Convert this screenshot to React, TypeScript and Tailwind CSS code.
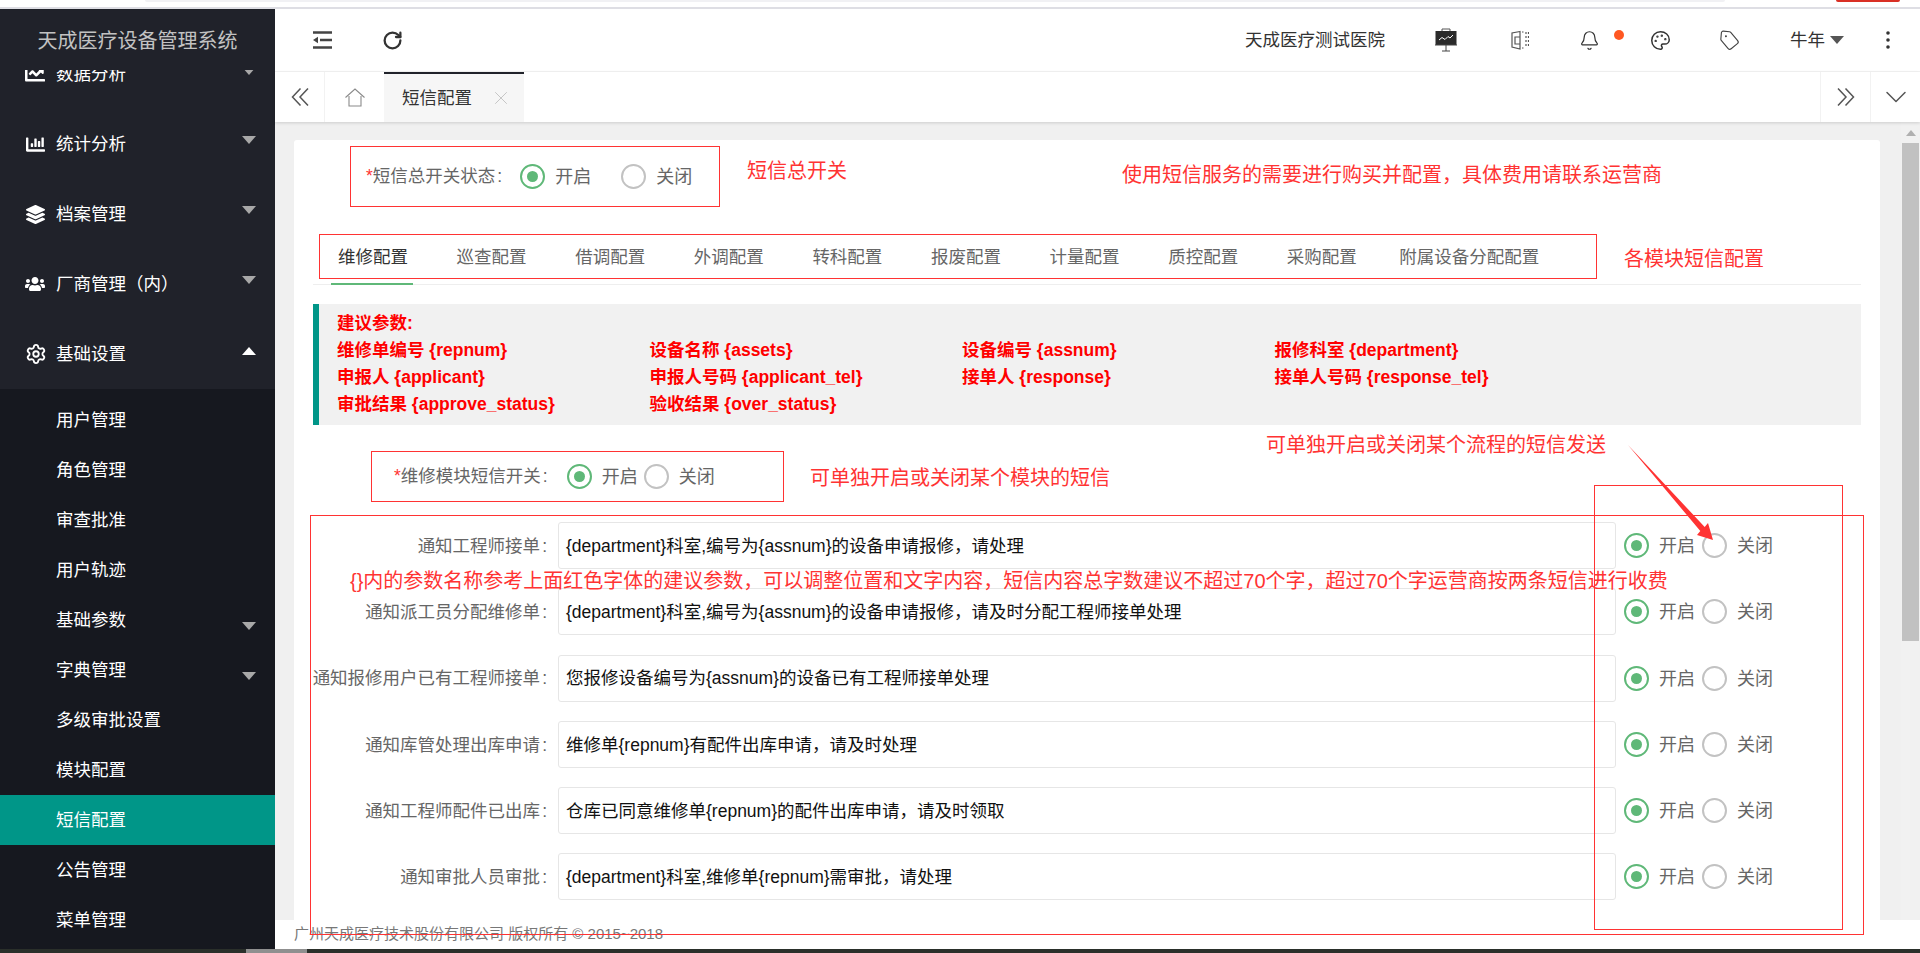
import { FaChartBar, FaChartLine, FaLayerGroup, FaUsers } from 'react-icons/fa'
import { Bell, ChevronDown, Palette, RotateCw, Settings, Tag, X } from 'lucide-react'

const FONT = 'font-["Liberation_Sans","Noto_Sans_CJK_SC",sans-serif]'

const topMenu = [
  { name: '统计分析', icon: <FaChartBar size={19} /> },
  { name: '档案管理', icon: <FaLayerGroup size={19} /> },
  { name: '厂商管理（内）', icon: <FaUsers size={20} /> },
]

const subMenu = [
  { name: '用户管理' },
  { name: '角色管理' },
  { name: '审查批准' },
  { name: '用户轨迹' },
  { name: '基础参数', arrow: true },
  { name: '字典管理', arrow: true },
  { name: '多级审批设置' },
  { name: '模块配置' },
  { name: '短信配置', active: true },
  { name: '公告管理' },
  { name: '菜单管理' },
]

const tabs = ['维修配置', '巡查配置', '借调配置', '外调配置', '转科配置', '报废配置', '计量配置', '质控配置', '采购配置', '附属设备分配配置']

const params = [
  ['维修单编号 {repnum}', '设备名称 {assets}', '设备编号 {assnum}', '报修科室 {department}'],
  ['申报人 {applicant}', '申报人号码 {applicant_tel}', '接单人 {response}', '接单人号码 {response_tel}'],
  ['审批结果 {approve_status}', '验收结果 {over_status}', '', ''],
]

const rows = [
  ['通知工程师接单', '{department}科室,编号为{assnum}的设备申请报修，请处理'],
  ['通知派工员分配维修单', '{department}科室,编号为{assnum}的设备申请报修，请及时分配工程师接单处理'],
  ['通知报修用户已有工程师接单', '您报修设备编号为{assnum}的设备已有工程师接单处理'],
  ['通知库管处理出库申请', '维修单{repnum}有配件出库申请，请及时处理'],
  ['通知工程师配件已出库', '仓库已同意维修单{repnum}的配件出库申请，请及时领取'],
  ['通知审批人员审批', '{department}科室,维修单{repnum}需审批，请处理'],
]

function Radio({ on }: { on?: boolean }) {
  return (
    <span
      className={`flex h-[25px] w-[25px] shrink-0 items-center justify-center rounded-full border-2 ${
        on ? 'border-[#5fb878]' : 'border-[#c2c2c2]'
      }`}
    >
      {on && <span className="h-[11px] w-[11px] rounded-full bg-[#5fb878]" />}
    </span>
  )
}

function RadioPair({ gap }: { gap: string }) {
  return (
    <div className={`flex items-center text-[18px] text-[#666] ${gap}`}>
      <div className="flex items-center gap-[10px]">
        <Radio on />
        <span className="pt-[2px]">开启</span>
      </div>
      <div className="flex items-center gap-[10px]">
        <Radio />
        <span className="pt-[2px]">关闭</span>
      </div>
    </div>
  )
}

function DoubleChevron({ flip }: { flip?: boolean }) {
  return (
    <svg width="18" height="18" viewBox="0 0 18 18" fill="none" stroke="#555" strokeWidth="1.5" className={flip ? 'rotate-180' : ''}>
      <path d="M9.5 0.5L1.5 9l8 8.5M17 0.5L9 9l8 8.5" />
    </svg>
  )
}

function Sidebar() {
  return (
    <aside className="flex w-[275px] shrink-0 flex-col overflow-hidden bg-[#20222a] text-[17.5px] text-white">
      <div className="z-10 flex h-[61px] shrink-0 items-center justify-center bg-[#20222a] pt-[2px] text-[20px] text-[#c2c2c2]">
        天成医疗设备管理系统
      </div>
      <nav className="mt-[-31px]">
        <div className="relative flex h-[70px] items-center pl-[25px]">
          <FaChartLine size={20} className="mr-[11px]" />
          数据分析
          <span className="absolute left-[242px] top-[28px] border-x-[7.5px] border-t-[8px] border-x-transparent border-t-[#a8a8a8]" />
        </div>
        {topMenu.map((m) => (
          <div key={m.name} className="relative flex h-[70px] items-center pl-[25px]">
            <span className="mr-[11px] flex w-[20px] justify-center">{m.icon}</span>
            {m.name}
            <span className="absolute left-[242px] top-[27px] border-x-[7.5px] border-t-[8px] border-x-transparent border-t-[#a8a8a8]" />
          </div>
        ))}
        <div className="relative flex h-[70px] items-center pl-[25px]">
          <Settings size={22} className="mr-[9px]" />
          基础设置
          <span className="absolute left-[242px] top-[28px] border-x-[7.5px] border-b-[8px] border-x-transparent border-b-white" />
        </div>
      </nav>
      <div className="flex-1 bg-[#16181f] pt-[6px]">
        {subMenu.map((s) => (
          <div
            key={s.name}
            className={`relative flex h-[50px] items-center pl-[56px] ${s.active ? 'bg-[#009688]' : ''}`}
          >
            {s.name}
            {s.arrow && (
              <span className="absolute left-[242px] top-[27px] border-x-[7.5px] border-t-[8px] border-x-transparent border-t-[#a8a8a8]" />
            )}
          </div>
        ))}
      </div>
    </aside>
  )
}

function Header() {
  return (
    <header className="flex h-[63px] shrink-0 items-center border-b border-[#f4f4f4] bg-white pl-[38px] text-[17.5px] text-[#333]">
      <svg width="19" height="18" viewBox="0 0 19 18" className="text-[#444]">
        <path d="M0 1.5h19M7 9h12M0 16.5h19" stroke="currentColor" strokeWidth="2.4" fill="none" />
        <path d="M0 9l5-3.2v6.4z" fill="currentColor" />
      </svg>
      <RotateCw size={21} strokeWidth={2.6} className="ml-[50px] text-[#333]" />
      <span className="ml-[842px]">天成医疗测试医院</span>
      <svg width="22" height="24" viewBox="0 0 22 24" className="ml-[50px]">
        <path d="M7 3V1h8v2" fill="none" stroke="#555" />
        <rect x="0.5" y="3" width="21" height="14" fill="#2b2b2b" />
        <path d="M4 12l3-2.5 3 2 3-3 2 1.5 3-3" stroke="#fff" strokeWidth="1" fill="none" />
        <path d="M11 17v6M7 23h8M0 17h22" stroke="#444" strokeWidth="1" />
      </svg>
      <svg width="18" height="20" viewBox="0 0 18 20" className="ml-[54px]">
        <path d="M9 1.5L1 3v14l8 2z M4 7h5v7H4z" fill="none" stroke="#555" strokeWidth="1.2" />
        <path d="M11 2h1.5M11 18h1.5M15 2v15M17.5 2v15" stroke="#555" strokeWidth="1.2" strokeDasharray="2 2" fill="none" />
      </svg>
      <div className="relative ml-[50px]">
        <Bell size={21} strokeWidth={1.4} className="text-[#333]" />
        <span className="absolute left-[35px] top-[0px] h-[10px] w-[10px] rounded-full bg-[#ff5722]" />
      </div>
      <Palette size={21} strokeWidth={1.7} className="ml-[50px] text-[#333]" />
      <Tag size={21} strokeWidth={1.3} className="ml-[48px] rotate-[5deg] text-[#444]" />
      <span className="ml-[50px]">牛年</span>
      <span className="ml-[5px] border-x-[7.5px] border-t-[8px] border-x-transparent border-t-[#555]" />
      <svg width="4" height="20" viewBox="0 0 4 20" className="ml-[42px]">
        <circle cx="2" cy="3" r="1.8" fill="#333" />
        <circle cx="2" cy="10" r="1.8" fill="#333" />
        <circle cx="2" cy="17" r="1.8" fill="#333" />
      </svg>
    </header>
  )
}

function TabBar() {
  return (
    <div className="z-10 flex h-[50px] shrink-0 items-stretch bg-white text-[17.5px] shadow-[0_1px_3px_rgba(0,0,0,0.15)]">
      <div className="flex w-[50px] items-center justify-center border-r border-[#f2f2f2]">
        <DoubleChevron />
      </div>
      <div className="flex w-[59px] items-center justify-center">
        <svg width="20" height="19" viewBox="0 0 20 19" fill="none" stroke="#8a8a8a" strokeWidth="1.1">
          <path d="M0.5 9.5L10 1l9.5 8.5M4 8v10h12V8" />
        </svg>
      </div>
      <div className="flex w-[140px] items-center border-t-2 border-[#20222a] bg-[#f6f6f6] pl-[18px] text-[#333]">
        短信配置
        <X size={22} strokeWidth={0.9} className="ml-[18px] text-[#bbb]" />
      </div>
      <div className="flex-1" />
      <div className="flex w-[50px] items-center justify-center border-l border-[#f2f2f2]">
        <DoubleChevron flip />
      </div>
      <div className="flex w-[50px] items-center justify-center border-l border-[#f2f2f2] text-[#555]">
        <ChevronDown size={36} strokeWidth={1} />
      </div>
    </div>
  )
}

function Card() {
  return (
    <div className="h-[900px] w-[1586px] shrink-0 rounded-t-[3px] bg-white text-[#666]">
      <div className="flex items-center pt-[6px]">
        <div className="ml-[56px] flex h-[61px] w-[370px] items-center border border-[#ff3333] pl-[15px] text-[17.5px]">
          <span className="text-[#ff3333]">*</span>
          <span>
            短信总开关状态<span className="ml-[2px]">:</span>
          </span>
          <div className="ml-[18px]">
            <RadioPair gap="gap-[30px]" />
          </div>
        </div>
        <span className="mb-[11px] ml-[27px] text-[20px] text-[#ff3333]">短信总开关</span>
        <span className="mb-[3px] ml-[275px] text-[20px] text-[#ff3333]">使用短信服务的需要进行购买并配置，具体费用请联系运营商</span>
      </div>

      <div className="mt-[27px] flex items-center">
        <div className="ml-[25px] flex h-[45px] w-[1278px] items-center border border-[#ff3333] pl-[18px] pt-[2px] text-[17.5px]">
          {tabs.map((t, i) => (
            <span
              key={t}
              className={`mr-[48.6px] whitespace-nowrap ${i === 0 ? 'text-[#333]' : ''} ${i === 9 ? 'ml-[-6px]' : ''}`}
            >
              {t}
            </span>
          ))}
        </div>
        <span className="ml-[27px] pt-[5px] text-[20px] text-[#ff3333]">各模块短信配置</span>
      </div>
      <div className="mx-[19px] mt-[4px] h-[2px] border-b border-[#eeeeee]">
        <div className="ml-[18px] h-[2px] w-[82px] bg-[#5fb878]" />
      </div>

      <div className="mx-[19px] mt-[19px] h-[121px] border-l-[6px] border-[#009688] bg-[#f1f1f1] pl-[18px] pt-[6px] text-[17.5px] font-bold leading-[27px] text-[#ff0000]">
        <div>建议参数:</div>
        {params.map((line, i) => (
          <div key={i} className="grid grid-cols-[312.5px_312.5px_312.5px_1fr]">
            {line.map((p, j) => (
              <span key={j}>{p}</span>
            ))}
          </div>
        ))}
      </div>

      <div className="mt-[26px] flex items-center">
        <div className="ml-[77px] flex h-[51px] w-[413px] items-center border border-[#ff3333] pl-[22px] text-[17.5px]">
          <span className="text-[#ff3333]">*</span>
          <span>
            维修模块短信开关<span className="ml-[2px]">:</span>
          </span>
          <div className="ml-[19px]">
            <RadioPair gap="gap-[6px]" />
          </div>
        </div>
        <span className="ml-[26px] pt-[2px] text-[20px] text-[#ff3333]">可单独开启或关闭某个模块的短信</span>
      </div>

      <div className="mt-[20px] flex flex-col gap-[19.25px]">
        {rows.map(([label, value]) => (
          <div key={label} className="flex h-[47px] items-center text-[17.5px]">
            <div className="w-[253px] whitespace-nowrap pt-[1px] text-right">
              {label}
              <span className="ml-[2px]">:</span>
            </div>
            <div className="ml-[11px] flex h-[47px] w-[1058px] items-center rounded-[3px] border border-[#e6e6e6] pl-[7px] pt-[1px] text-[#111]">
              {value}
            </div>
            <div className="ml-[8px]">
              <RadioPair gap="gap-[7px]" />
            </div>
          </div>
        ))}
      </div>
    </div>
  )
}

export default function App() {
  return (
    <div className={`relative flex h-[953px] w-[1920px] flex-col overflow-hidden bg-white ${FONT}`}>
      <div className="relative h-[9px] shrink-0 border-b-2 border-[#dedee4] bg-white">
        <div className="absolute left-[145px] top-0 h-[2px] w-[1580px] rounded-b-[3px] bg-[#f1f1f4]" />
        <div className="absolute left-[1836px] top-0 h-[2px] w-[64px] rounded-b-[3px] bg-[#d93025]" />
      </div>
      <div className="flex min-h-0 flex-1">
        <Sidebar />
        <main className="flex min-w-0 flex-1 flex-col">
          <Header />
          <TabBar />
          <div className="flex min-h-0 flex-1 bg-[#f0f0f0]">
            <div className="min-w-0 flex-1 overflow-hidden pl-[19px] pt-[18px]">
              <Card />
            </div>
            <div className="flex w-[19px] shrink-0 flex-col items-center bg-[#f1f1f1]">
              <span className="mt-[8px] border-x-[5px] border-b-[6px] border-x-transparent border-b-[#b0b0b0]" />
              <div className="mt-[7px] h-[498px] w-[17px] bg-[#c1c1c1]" />
            </div>
          </div>
          <footer className="flex h-[29px] shrink-0 items-center bg-white pl-[19px] text-[15px] text-[#777]">
            广州天成医疗技术股份有限公司 版权所有 © 2015~2018
          </footer>
        </main>
      </div>
      <div className="relative h-[4px] shrink-0 bg-[#2a2f2a]">
        <div className="absolute left-[246px] h-[4px] w-[61px] bg-[#8f8f8f]" />
      </div>

      {/* red notes drawn over the page */}
      <div className="pointer-events-none absolute left-[310px] top-[515px] h-[420px] w-[1554px] border border-[#ff3333]" />
      <div className="pointer-events-none absolute left-[1594px] top-[485px] h-[445px] w-[249px] border border-[#ff3333]" />
      <span className="absolute left-[350px] top-[567px] whitespace-nowrap text-[20px] leading-[28px] text-[#ff3333]">
        {'{}'}内的参数名称参考上面红色字体的建议参数，可以调整位置和文字内容，短信内容总字数建议不超过70个字，超过70个字运营商按两条短信进行收费
      </span>
      <span className="absolute left-[1266px] top-[431px] whitespace-nowrap text-[20px] leading-[28px] text-[#ff3333]">
        可单独开启或关闭某个流程的短信发送
      </span>
      <svg width="100" height="110" viewBox="0 0 100 110" className="absolute left-[1624px] top-[440px]">
        <path d="M4 5L80.7 87L84 83L89 100L73 95L76.3 91Z" fill="#ff3333" />
      </svg>
    </div>
  )
}
